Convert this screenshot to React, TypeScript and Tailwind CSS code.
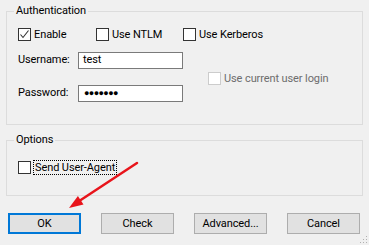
import React from "react";

function Check({ checked, disabled }: { checked?: boolean; disabled?: boolean }) {
  return (
    <span
      className={
        "flex h-[13px] w-[13px] shrink-0 items-center justify-center border bg-white " +
        (disabled ? "border-[#cccccc]" : "border-[#333333]")
      }
    >
      {checked && (
        <svg width="11" height="11" viewBox="0 0 11 11">
          <path d="M1.5 5.5 L4 8.5 L9.5 1.5" fill="none" stroke="#333333" strokeWidth="1.1" />
        </svg>
      )}
    </span>
  );
}

function Box({ label, checked, disabled, focus }: { label: string; checked?: boolean; disabled?: boolean; focus?: boolean }) {
  return (
    <label className="flex h-[15px] items-center gap-[2px]">
      <Check checked={checked} disabled={disabled} />
      <span
        className={
          "leading-[13px] " +
          (disabled ? "text-[#6d6d6d] pl-[1px]" : "") +
          (focus ? " border border-dotted border-black px-[1px]" : " pl-[1px]")
        }
      >
        {label}
      </span>
    </label>
  );
}

function Btn({ label, primary }: { label: string; primary?: boolean }) {
  return (
    <button
      className={
        "h-[21px] w-[73px] bg-[#e1e1e1] leading-none text-black " +
        (primary ? "border-2 border-[#0078d7]" : "border border-[#adadad]")
      }
    >
      {label}
    </button>
  );
}

export default function App() {
  return (
    <div
      className="relative h-[245px] w-[369px] overflow-hidden bg-[#f0f0f0] pt-[3px] text-[11px] tracking-[-0.1px] text-black"
      style={{ fontFamily: 'Roboto, "Noto Sans", sans-serif' }}
    >
      <fieldset className="mx-[6px] h-[122px] border border-[#dcdcdc]">
        <legend className="ml-[7px] px-[2px] leading-[16px]">Authentication</legend>
        <div className="mt-[8px] flex pl-[11px]">
          <div className="w-[78px]"><Box label="Enable" checked /></div>
          <div className="w-[87px]"><Box label="Use NTLM" /></div>
          <Box label="Use Kerberos" />
        </div>
        <div className="mt-[10px] flex items-center pl-[11px]">
          <div className="flex flex-col gap-[16px]">
            <div className="flex items-center">
              <span className="w-[60px]">Username:</span>
              <div className="flex h-[17px] w-[105px] items-center border border-[#7a7a7a] bg-white pl-[4px]">test</div>
            </div>
            <div className="flex items-center">
              <span className="w-[60px]">Password:</span>
              <div className="flex h-[17px] w-[105px] items-center border border-[#7a7a7a] bg-white pl-[5px] text-[9px] tracking-[-0.6px]">
                ●●●●●●●
              </div>
            </div>
          </div>
          <div className="ml-[25px] mt-[2px]">
            <Box label="Use current user login" disabled />
          </div>
        </div>
      </fieldset>

      <fieldset className="mx-[6px] mt-[7px] h-[64px] border border-[#dcdcdc]">
        <legend className="ml-[7px] px-[2px] leading-[16px]">Options</legend>
        <div className="mt-[12px] pl-[11px]">
          <Box label="Send User-Agent" focus />
        </div>
      </fieldset>

      <div className="mt-[17px] flex justify-between pl-[8px] pr-[9px]">
        <Btn label="OK" primary />
        <Btn label="Check" />
        <Btn label="Advanced..." />
        <Btn label="Cancel" />
      </div>

      <svg className="pointer-events-none absolute left-0 top-0" width="369" height="245">
        <line x1="137" y1="163" x2="80" y2="200.5" stroke="#e8141b" strokeWidth="2.5" strokeLinecap="round" />
        <polygon points="69,208 83.5,204.5 77.9,196.1" fill="#e8141b" />
        <g fill="#b0b0b0">
          <rect x="366" y="236" width="1" height="1" />
          <rect x="363" y="239" width="1" height="1" />
          <rect x="366" y="239" width="1" height="1" />
          <rect x="360" y="242" width="1" height="1" />
          <rect x="363" y="242" width="1" height="1" />
          <rect x="366" y="242" width="1" height="1" />
        </g>
      </svg>
    </div>
  );
}
